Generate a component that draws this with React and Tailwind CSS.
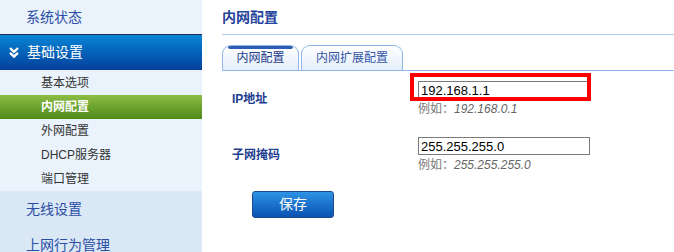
import React from "react";

const cjk = { fontFamily: '"Liberation Sans", "Noto Sans CJK SC", sans-serif' };

function DoubleChevron() {
  return (
    <svg width="10" height="11" viewBox="0 0 10 11" className="shrink-0">
      <path d="M1 1 L5 4.8 L9 1" fill="none" stroke="#fff" strokeWidth="2.4" />
      <path d="M1 5.8 L5 9.6 L9 5.8" fill="none" stroke="#fff" strokeWidth="2.4" />
    </svg>
  );
}

const subItems = ["基本选项", "内网配置", "外网配置", "DHCP服务器", "端口管理"];

function Sidebar() {
  return (
    <div className="w-[202px] shrink-0 h-[252px] bg-[#dae7f5] flex flex-col overflow-hidden">
      <div className="h-[34px] shrink-0 bg-[#eaf3fc] flex items-center pl-[26px] text-[14px] text-[#2a4ea6]">
        系统状态
      </div>
      {/* expanded group */}
      <div className="h-[36px] shrink-0 border-t border-[#1a2d55] bg-gradient-to-b from-[#0b86d6] to-[#073f9b] flex items-center pl-[9px] gap-[8px] text-[14px] text-white">
        <DoubleChevron />
        <span>基础设置</span>
      </div>
      <div className="bg-[#eaf3fc] pt-[1px] shrink-0 flex flex-col">
        {subItems.map((item) => {
          const active = item === "内网配置";
          return (
            <div
              key={item}
              className={
                active
                  ? "h-[24px] flex items-center pl-[41px] text-[12px] font-bold text-white bg-gradient-to-b from-[#8dbd45] to-[#4e8a17]"
                  : "h-[24px] flex items-center pl-[41px] text-[12px] text-[#333]"
              }
            >
              {item}
            </div>
          );
        })}
      </div>
      <div className="h-[36px] shrink-0 flex items-center pl-[26px] text-[14px] text-[#2a4ea6]">
        无线设置
      </div>
      <div className="h-[36px] shrink-0 flex items-center pl-[26px] text-[14px] text-[#2a4ea6]">
        上网行为管理
      </div>
    </div>
  );
}

function Field({ label, value, example, highlight }) {
  return (
    <div className="flex h-[35px]">
      <div className="w-[196px] pl-[10px] flex items-center text-[12px] font-bold text-[#1d3d8f]">
        {label}
      </div>
      <div className="flex flex-col">
        <div className="relative">
          <input
            readOnly
            value={value}
            className="block w-[172px] h-[18px] border border-[#7a7a7a] px-[2px] text-[13px] leading-[16px] text-black outline-none bg-white"
          />
          {highlight && (
            <div className="absolute -left-[8px] -top-[8px] w-[181px] h-[28px] border-4 border-[#ff0000] pointer-events-none" />
          )}
        </div>
        <div className="mt-[3px] text-[12px] text-[#777] leading-[14px]">
          例如：<i className="text-[#666]">{example}</i>
        </div>
      </div>
    </div>
  );
}

export default function App() {
  return (
    <div className="w-[674px] h-[252px] flex bg-white overflow-hidden" style={cjk}>
      <Sidebar />
      <div className="flex-1 pl-[20px] flex flex-col">
        <div className="h-[35px] shrink-0 border-b border-[#a9c9ee] flex items-center text-[14px] font-bold text-[#23439a]">
          内网配置
        </div>
        {/* tabs */}
        <div className="mt-[10px] shrink-0 flex items-end gap-[2px] border-b border-[#8fb8e8] h-[26px]">
          <div className="w-[77px] h-[25px] rounded-t-[9px] border border-b-0 border-[#8fb8e8] bg-gradient-to-b from-white to-[#e4eefa] overflow-hidden flex flex-col">
            <div className="h-[3px] mx-[5px] bg-[#2b5cb6] rounded-b-[2px]" />
            <div className="flex-1 flex items-center justify-center text-[12px] text-[#1f3c88] pb-[3px]">
              内网配置
            </div>
          </div>
          <div className="w-[102px] h-[25px] rounded-t-[9px] border border-b-0 border-[#8fb8e8] bg-gradient-to-b from-white to-[#e4eefa] flex items-center justify-center text-[12px] text-[#3556a8]">
            内网扩展配置
          </div>
        </div>
        {/* form */}
        <div className="mt-[10px] shrink-0 flex flex-col gap-[21px]">
          <Field label="IP地址" value="192.168.1.1" example="192.168.0.1" highlight />
          <Field label="子网掩码" value="255.255.255.0" example="255.255.255.0" />
        </div>
        <div className="mt-[19px] shrink-0 pl-[30px]">
          <button className="w-[82px] h-[27px] rounded-[3px] border border-[#1b4b8c] bg-gradient-to-b from-[#2e93e4] to-[#0b52b3] text-white text-[14px]">
            保存
          </button>
        </div>
      </div>
    </div>
  );
}
